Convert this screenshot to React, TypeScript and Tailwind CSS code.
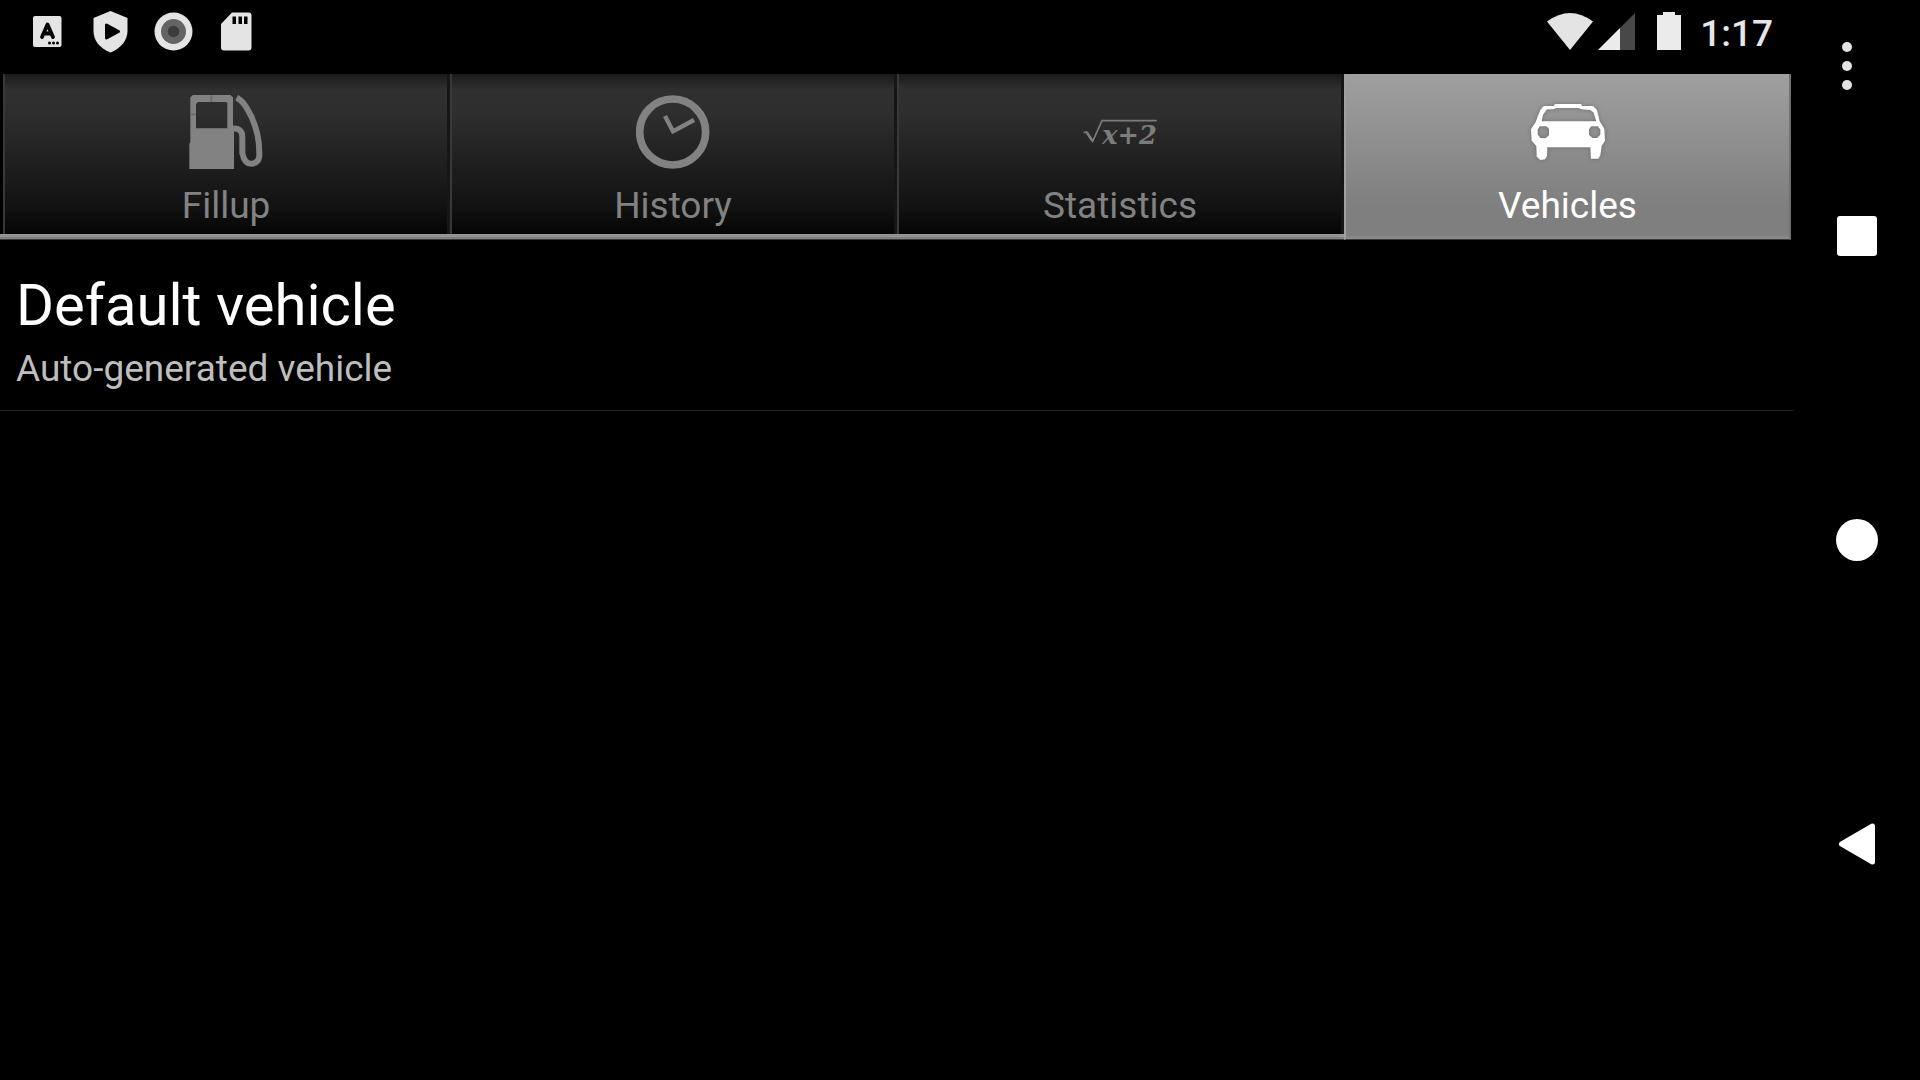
import type { ReactNode } from "react";

const glyph = "h-[74px] w-[74px]";

function PumpIcon() {
  return (
    <svg className={glyph} viewBox="569 105 222 222" fill="none" stroke="#828282" aria-hidden="true">
      <path fill="#828282" stroke="none" fillRule="evenodd" d="M573 112l8-7h112l8 7v90l3 4v121H570v-76l3-5zM590 132v73h94v-75l-4-4h-84z" />
      <path stroke="#6a6a6a" strokeWidth="5" d="M636 106v20M573 163h16" />
      <path strokeWidth="18" d="M698 206c22-2 31 6 31 26v48c4 18 12 31 26 31 16 0 25-10 25-27 1-50-14-100-36-137-9-16-17-26-32-34" />
    </svg>
  );
}

function ClockIcon() {
  return (
    <svg className={glyph} viewBox="109 45 222 222" fill="none" stroke="#828282" aria-hidden="true">
      <circle cx="219" cy="156" r="99" strokeWidth="23" />
      <path strokeWidth="13" d="M196 108l24 46 63-34" />
    </svg>
  );
}

function RootIcon() {
  return (
    <svg className={glyph} viewBox="130 15 222 222" fill="none" stroke="#7c7c7c" aria-hidden="true">
      <path strokeWidth="5" d="M132 128l9-2 18 28 28-62h164" />
      <path strokeWidth="8" d="M142 128l16 24" />
      <text x="188" y="162" fill="#7c7c7c" stroke="none" fontSize="77" fontWeight="700" fontStyle="italic" fontFamily="'DejaVu Serif', serif">
        x+2
      </text>
    </svg>
  );
}

function CarIcon() {
  return (
    <svg className={`${glyph} drop-shadow-[0_0_2px_rgba(0,0,0,0.25)]`} viewBox="90 15 222 222" fill="#fff" aria-hidden="true">
      <path
        fillRule="evenodd"
        d="M128 48h30l4-6h78l4 6h32l12 12 8 34 14 22 2 36-10 16-4 28-6 10h-22l-2-34H139l-1 26-6 10-14 2-11-10-1-32-14-16-2-34 14-22 14-36zM138 58l-12 16-4 20h164l-8-26-10-8-26-2-10-4h-66l-10 4zM116 109l-6 10v14l8 11 16 1 10-9v-20l-8-7zM271 109l-7 9v16l10 10h14l10-10v-16l-8-9z"
      />
    </svg>
  );
}

const tabs: { label: string; icon: ReactNode }[] = [
  { label: "Fillup", icon: <PumpIcon /> },
  { label: "History", icon: <ClockIcon /> },
  { label: "Statistics", icon: <RootIcon /> },
  { label: "Vehicles", icon: <CarIcon /> },
];

const notif = "h-[63px] w-[63px]";

function StatusBar() {
  return (
    <header className="flex h-[74px] items-start justify-between pr-[21px] pl-4">
      <div className="flex">
        <svg className={notif} viewBox="0 0 63 63" aria-hidden="true">
          <rect x="17" y="16" width="28.500" height="31" rx="2" fill="#e4e4e4" />
          <path d="M26 37l5.500-12.500L37 37M28 33.500h7" fill="none" stroke="#000" strokeWidth="3.800" strokeLinecap="round" strokeLinejoin="round" />
          <circle cx="33.500" cy="43" r="1.500" />
          <circle cx="37.500" cy="43" r="1.500" />
          <circle cx="41.500" cy="43" r="1.500" />
        </svg>
        <svg className={notif} viewBox="0 0 63 63" aria-hidden="true">
          <path fill="#e4e4e4" d="M31.500 11L48.500 18v13c0 9-6 17-17 21.500C20 48 14.500 40 14.500 31V18z" />
          <path d="M27.500 25v13l12-6.500z" stroke="#000" strokeWidth="3" strokeLinejoin="round" />
        </svg>
        <svg className={notif} viewBox="0 0 63 63" aria-hidden="true">
          <circle cx="31.500" cy="31.500" r="19" fill="#e4e4e4" />
          <circle cx="31.500" cy="31.500" r="12.500" fill="#646464" />
          <circle cx="31.500" cy="31.500" r="5.700" fill="#3c3c3c" />
        </svg>
        <svg className={notif} viewBox="0 0 63 63" aria-hidden="true">
          <path fill="#e4e4e4" d="M27 12.500H43.500q3 0 3 3v32q0 3-3 3H19q-3 0-3-3V24z" />
          <path d="M27.500 16.500h3.500v7.500h-3.500zM33.500 16.500h3.500v7.500h-3.500zM39 16.500h3.500v7.500H39z" />
        </svg>
      </div>
      <div className="flex">
        <svg className="h-[63px] w-[48px]" viewBox="0 0 48 63" aria-hidden="true">
          <path fill="#e4e4e4" d="M1 21.500Q24 4.500 47 21.500L24 50z" />
        </svg>
        <svg className="h-[63px] w-[48px]" viewBox="0 0 48 63" aria-hidden="true">
          <path fill="#484848" d="M41 13v37H4z" />
          <path fill="#ebebeb" d="M26 28v22H4z" />
        </svg>
        <svg className="h-[63px] w-[58px]" viewBox="0 0 58 63" aria-hidden="true">
          <path fill="#ebebeb" d="M15 15h6v-3h12v3h6v35H15z" />
        </svg>
        <time className="pt-3 text-[37px] leading-[44px] font-medium text-[#e6e6e6]">1:17</time>
      </div>
    </header>
  );
}

function TabBar() {
  return (
    <nav
      role="tablist"
      className="mr-[3px] grid h-[166px] grid-cols-4 bg-[linear-gradient(to_top,#3a3a3a_1px,#808080_1px,#808080_3px,#949494_3px,#949494_6px,transparent_6px)] pl-[3px]"
    >
      {tabs.map((tab, i) => {
        const active = i === 3;
        return (
          <button
            key={tab.label}
            type="button"
            role="tab"
            aria-selected={active}
            className={
              active
                ? "flex flex-col items-center border-r-2 border-b border-l-2 border-r-[#707070] border-b-[#3a3a3a] border-l-[#a0a0a0] bg-[linear-gradient(#9f9f9f,#7f7f7f_80%,#7f7f7f_97%,#8c8c8c)] pt-[21px] text-white"
                : "mb-[6px] flex flex-col items-center border-r-3 border-l-2 border-r-[#161616] border-l-[#383838] bg-[linear-gradient(#1a1a1a,#303030_10%,#2e2e2e_25%,#111_85%,#050505)] pt-[21px] text-[#828282]"
            }
          >
            {tab.icon}
            <span className="mt-[15px] text-[37px] leading-[44px]">{tab.label}</span>
          </button>
        );
      })}
    </nav>
  );
}

function NavigationBar() {
  return (
    <aside className="relative flex w-[126px] shrink-0 flex-col items-center justify-center">
      <button type="button" aria-label="More options" className="absolute top-[36px] left-[33px] p-[5px]">
        <svg className="h-[50px] w-[30px]" viewBox="0 0 30 50" fill="#e4e4e4" aria-hidden="true">
          <circle cx="15" cy="6" r="5" />
          <circle cx="15" cy="25" r="5" />
          <circle cx="15" cy="44" r="5" />
        </svg>
      </button>
      <button type="button" aria-label="Recent apps" className="flex h-[304px] w-full items-center justify-center">
        <span className="h-[40px] w-[40px] rounded-[3px] bg-white" />
      </button>
      <button type="button" aria-label="Home" className="flex h-[304px] w-full items-center justify-center">
        <span className="h-[42px] w-[42px] rounded-full bg-white" />
      </button>
      <button type="button" aria-label="Back" className="flex h-[304px] w-full items-center justify-center">
        <svg className="h-[44px] w-[40px]" viewBox="0 0 40 44" aria-hidden="true">
          <path d="M4.500 22L35.500 4v36z" fill="#fff" stroke="#fff" strokeWidth="5" strokeLinejoin="round" />
        </svg>
      </button>
    </aside>
  );
}

export default function App() {
  return (
    <div className="flex min-h-screen bg-black font-['Roboto',sans-serif] text-white">
      <div className="flex min-w-0 flex-1 flex-col">
        <StatusBar />
        <TabBar />
        <ul>
          <li className="border-b border-[#222] pt-[31px] pb-[19px] pl-4">
            <h2 className="text-[58px] leading-[68px]">Default vehicle</h2>
            <p className="mt-2 text-[37px] leading-[44px] text-[#bebebe]">Auto-generated vehicle</p>
          </li>
        </ul>
      </div>
      <NavigationBar />
    </div>
  );
}
